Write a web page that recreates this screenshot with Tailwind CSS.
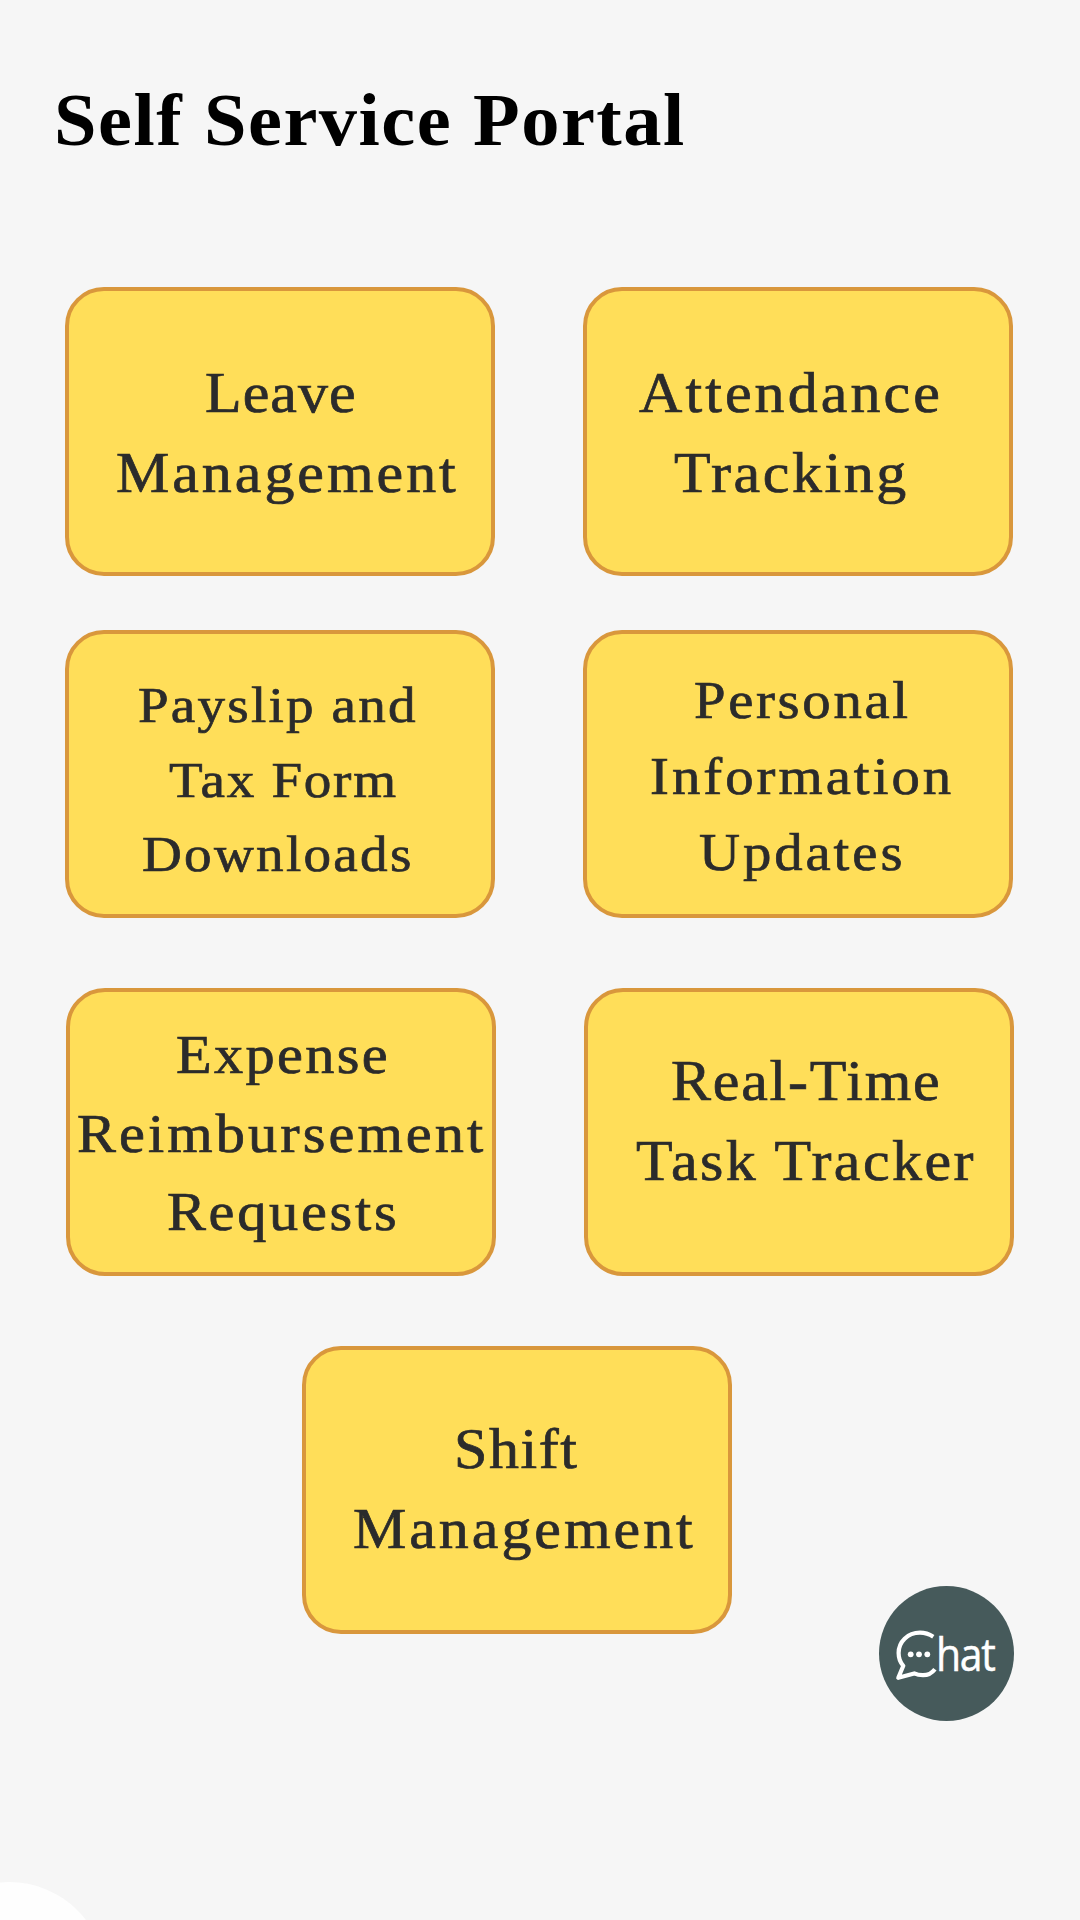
<!DOCTYPE html>
<html lang="en">
<head>
<meta charset="utf-8">
<title>Self Service Portal</title>
<script src="https://cdn.jsdelivr.net/npm/@tailwindcss/browser@4"></script>
</head>
<body class="bg-[#f6f6f6]">
<main class="relative flex h-[1920px] w-[1080px] flex-col overflow-hidden pt-[83px] font-['Liberation_Serif',serif] text-[#2b2b2b]">
  <h1 class="h-[204px] w-fit origin-left scale-x-[1.04] whitespace-nowrap ml-[53.7px] text-[73.5px] leading-[76px] font-bold tracking-[1.47px] text-black">Self Service Portal</h1>

  <div class="flex gap-[88px] pl-[65px] whitespace-nowrap [-webkit-text-stroke:0.7px_#2b2b2b]">
    <a class="h-[289px] w-[430px] rounded-[39px] border-4 border-[#d9973c] bg-[#ffde59] pt-[61.6px] text-[56px] leading-[80.8px]">
      <span class="ml-[135.6px] block w-fit origin-left scale-x-[1.07] tracking-[1.01px]">Leave</span>
      <span class="ml-[47px] block w-fit origin-left scale-x-[1.07] tracking-[2.8px]">Management</span>
    </a>
    <a class="h-[289px] w-[430px] rounded-[39px] border-4 border-[#d9973c] bg-[#ffde59] pt-[61.6px] text-[56px] leading-[80.8px]">
      <span class="ml-[52px] block w-fit origin-left scale-x-[1.07] tracking-[2.9px]">Attendance</span>
      <span class="ml-[87.3px] block w-fit origin-left scale-x-[1.07] tracking-[2.4px]">Tracking</span>
    </a>
  </div>

  <div class="mt-[54px] flex gap-[88px] pl-[64.5px] whitespace-nowrap [-webkit-text-stroke:0.7px_#2b2b2b]">
    <a class="h-[288px] w-[430px] rounded-[39px] border-4 border-[#d9973c] bg-[#ffde59] pt-[34px] text-[51.5px] leading-[74.6px]">
      <span class="ml-[69.1px] block w-fit origin-left scale-x-[1.07] tracking-[2.05px]">Payslip and</span>
      <span class="ml-[100.2px] block w-fit origin-left scale-x-[1.07] tracking-[1.6px]">Tax Form</span>
      <span class="ml-[73.1px] block w-fit origin-left scale-x-[1.07] tracking-[2.15px]">Downloads</span>
    </a>
    <a class="h-[288px] w-[430px] rounded-[39px] border-4 border-[#d9973c] bg-[#ffde59] pt-[27.8px] text-[53px] leading-[76px]">
      <span class="ml-[107.5px] block w-fit origin-left scale-x-[1.07] tracking-[2.5px]">Personal</span>
      <span class="ml-[63.5px] block w-fit origin-left scale-x-[1.07] tracking-[2.83px]">Information</span>
      <span class="ml-[112.2px] block w-fit origin-left scale-x-[1.07] tracking-[2.75px]">Updates</span>
    </a>
  </div>

  <div class="mt-[70px] flex gap-[88px] pl-[66px] whitespace-nowrap [-webkit-text-stroke:0.7px_#2b2b2b]">
    <a class="h-[288px] w-[430px] rounded-[39px] border-4 border-[#d9973c] bg-[#ffde59] pt-[24.4px] text-[54.5px] leading-[78.5px]">
      <span class="ml-[105.9px] block w-fit origin-left scale-x-[1.07] tracking-[2.2px]">Expense</span>
      <span class="ml-[7px] block w-fit origin-left scale-x-[1.07] tracking-[2.88px]">Reimbursement</span>
      <span class="ml-[96.9px] block w-fit origin-left scale-x-[1.07] tracking-[2.55px]">Requests</span>
    </a>
    <a class="h-[288px] w-[430px] rounded-[39px] border-4 border-[#d9973c] bg-[#ffde59] pt-[48.8px] text-[56px] leading-[80px]">
      <span class="ml-[83px] block w-fit origin-left scale-x-[1.07] tracking-[1.7px]">Real-Time</span>
      <span class="ml-[48px] block w-fit origin-left scale-x-[1.07] tracking-[2.3px]">Task Tracker</span>
    </a>
  </div>

  <div class="mt-[70px] flex pl-[301.5px] whitespace-nowrap [-webkit-text-stroke:0.7px_#2b2b2b]">
    <a class="h-[288px] w-[430px] rounded-[39px] border-4 border-[#d9973c] bg-[#ffde59] pt-[58.8px] text-[56px] leading-[80px]">
      <span class="ml-[148.4px] block w-fit origin-left scale-x-[1.07] tracking-[1.5px]">Shift</span>
      <span class="ml-[47.4px] block w-fit origin-left scale-x-[1.07] tracking-[2.8px]">Management</span>
    </a>
  </div>

  <!-- Floating chat button -->
  <button class="absolute top-[1586px] left-[879px] size-[134.5px] rounded-full bg-[#465a5b] text-white">
    <svg class="absolute inset-0 size-full" viewBox="0 0 134.5 134.5" fill="none" stroke="currentColor" stroke-width="4.2" stroke-linejoin="round">
      <path d="M54.3 50.7C50 48 46 46.7 41 46.7C28.5 46.7 19.6 56 19.6 67C19.6 72 21 76.2 24.3 79.8L19.3 91.8L35.2 87.4C38 88.7 41 89.2 44 89.2C49 89.2 53 87 55.9 83.2"/>
      <g fill="currentColor" stroke="none"><circle cx="31.7" cy="68.3" r="2.9"/><circle cx="40" cy="68.3" r="2.9"/><circle cx="48.3" cy="68.3" r="2.9"/></g>
    </svg>
    <span class="absolute top-[44px] left-[56.5px] origin-left scale-x-[0.89] font-['Open_Sans',sans-serif] text-[46px] leading-[46px] tracking-[-1.5px] [-webkit-text-stroke:0.5px_white]">hat</span>
  </button>

  <div class="absolute top-[1882px] left-[-88px] size-[194px] rounded-full bg-[#fefefe]"></div>
</main>
</body>
</html>
